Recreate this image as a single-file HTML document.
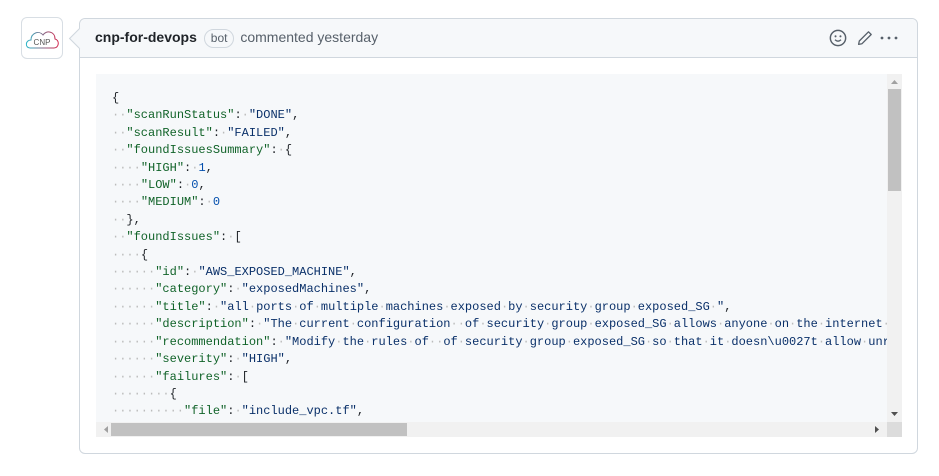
<!DOCTYPE html>
<html><head><meta charset="utf-8"><style>
body{margin:0;background:#fff;width:939px;height:476px;position:relative;font-family:"Liberation Sans",sans-serif;overflow:hidden}
.av{position:absolute;left:21px;top:17px;width:40px;height:40px;border:1px solid #d8dee4;border-radius:6px;background:#fff}
.box{position:absolute;left:79px;top:18px;width:837px;height:434px;border:1px solid #d0d7de;border-radius:6px;background:#fff}
.hd{height:38px;background:#f6f8fa;border-bottom:1px solid #d0d7de;border-radius:6px 6px 0 0;position:relative}
.arrow{position:absolute;left:-8px;top:12px;width:14px;height:14px;background:#f6f8fa;border-left:1px solid #d0d7de;border-bottom:1px solid #d0d7de;transform:rotate(45deg)}
.ht{position:absolute;left:15px;top:10px;font-size:14px;color:#57606a;white-space:nowrap}
.ht b{color:#1f2328}
.bot{display:inline-block;border:1px solid #d0d7de;border-radius:10px;padding:0 6px;font-size:12px;line-height:17px;margin:0 2px 0 3px;color:#57606a}
.code{position:absolute;left:16px;top:55px;width:806px;height:363px;background:#f6f8fa;overflow:hidden}
pre{margin:0;position:absolute;left:16px;top:16px;font-family:"Liberation Mono",monospace;font-size:12px;line-height:17.4px;color:#1f2328;width:775px;overflow:hidden}
.d{color:#bbb}.k{color:#116329}.s{color:#0a3069}.n{color:#0550ae}
.vs{position:absolute;right:0;top:0;width:15px;height:348px;background:#f1f1f1}
.hs{position:absolute;left:0;bottom:0;width:791px;height:15px;background:#f1f1f1}
.corner{position:absolute;right:0;bottom:0;width:15px;height:15px;background:#dcdcdc}
</style></head><body>
<div class="av"><svg width="40" height="40" viewBox="0 0 40 40"><defs><linearGradient id="g" x1="0" x2="1"><stop offset="0" stop-color="#2bb5c8"/><stop offset="1" stop-color="#d2224a"/></linearGradient></defs><path d="M8 30 C3 30 3 22 9 22 C9 15 17 12 21 17 C24 12 33 13 33 21 C38 22 37 30 32 30 Z" fill="none" stroke="url(#g)" stroke-width="1"/><text x="20" y="27" font-size="8" text-anchor="middle" fill="#555" font-family="Liberation Sans">CNP</text></svg></div>
<div class="box">
<div class="hd"><div class="arrow"></div><div class="ht"><b>cnp-for-devops</b> <span class="bot">bot</span> commented yesterday</div>
<svg style="position:absolute;left:749px;top:10px" width="18" height="18" viewBox="0 0 16 16"><circle cx="8" cy="8" r="6.8" fill="none" stroke="#57606a" stroke-width="1.3"/><circle cx="5.8" cy="6.5" r=".9" fill="#57606a"/><circle cx="10.2" cy="6.5" r=".9" fill="#57606a"/><path d="M5.3 9.6 Q8 12 10.7 9.6" fill="none" stroke="#57606a" stroke-width="1.2"/></svg>
<svg style="position:absolute;left:777px;top:11px" width="16" height="16" viewBox="0 0 16 16"><path d="M11.5 1.8 L14.2 4.5 L5 13.7 L1.6 14.4 L2.3 11 Z" fill="none" stroke="#57606a" stroke-width="1.3" stroke-linejoin="round"/></svg>
<svg style="position:absolute;left:800px;top:17px" width="18" height="4"><circle cx="2" cy="2" r="1.4" fill="#57606a"/><circle cx="9" cy="2" r="1.4" fill="#57606a"/><circle cx="16" cy="2" r="1.4" fill="#57606a"/></svg>
</div>
<div class="code">
<pre>{
<span class="d">··</span><span class="k">"scanRunStatus"</span>:<span class="d">·</span><span class="s">"DONE"</span>,
<span class="d">··</span><span class="k">"scanResult"</span>:<span class="d">·</span><span class="s">"FAILED"</span>,
<span class="d">··</span><span class="k">"foundIssuesSummary"</span>:<span class="d">·</span>{
<span class="d">····</span><span class="k">"HIGH"</span>:<span class="d">·</span><span class="n">1</span>,
<span class="d">····</span><span class="k">"LOW"</span>:<span class="d">·</span><span class="n">0</span>,
<span class="d">····</span><span class="k">"MEDIUM"</span>:<span class="d">·</span><span class="n">0</span>
<span class="d">··</span>},
<span class="d">··</span><span class="k">"foundIssues"</span>:<span class="d">·</span>[
<span class="d">····</span>{
<span class="d">······</span><span class="k">"id"</span>:<span class="d">·</span><span class="s">"AWS_EXPOSED_MACHINE"</span>,
<span class="d">······</span><span class="k">"category"</span>:<span class="d">·</span><span class="s">"exposedMachines"</span>,
<span class="d">······</span><span class="k">"title"</span>:<span class="d">·</span><span class="s">"all<span class="d">·</span>ports<span class="d">·</span>of<span class="d">·</span>multiple<span class="d">·</span>machines<span class="d">·</span>exposed<span class="d">·</span>by<span class="d">·</span>security<span class="d">·</span>group<span class="d">·</span>exposed_SG<span class="d">·</span>"</span>,
<span class="d">······</span><span class="k">"description"</span>:<span class="d">·</span><span class="s">"The<span class="d">·</span>current<span class="d">·</span>configuration<span class="d">··</span>of<span class="d">·</span>security<span class="d">·</span>group<span class="d">·</span>exposed_SG<span class="d">·</span>allows<span class="d">·</span>anyone<span class="d">·</span>on<span class="d">·</span>the<span class="d">·</span>internet<span class="d">·</span>to</span>
<span class="d">······</span><span class="k">"recommendation"</span>:<span class="d">·</span><span class="s">"Modify<span class="d">·</span>the<span class="d">·</span>rules<span class="d">·</span>of<span class="d">··</span>of<span class="d">·</span>security<span class="d">·</span>group<span class="d">·</span>exposed_SG<span class="d">·</span>so<span class="d">·</span>that<span class="d">·</span>it<span class="d">·</span>doesn\u0027t<span class="d">·</span>allow<span class="d">·</span>unrestricted</span>
<span class="d">······</span><span class="k">"severity"</span>:<span class="d">·</span><span class="s">"HIGH"</span>,
<span class="d">······</span><span class="k">"failures"</span>:<span class="d">·</span>[
<span class="d">········</span>{
<span class="d">··········</span><span class="k">"file"</span>:<span class="d">·</span><span class="s">"include_vpc.tf"</span>,
<span class="d">··········</span><span class="k">"matching"</span>:<span class="d">·</span>{
</pre>
<div class="vs"><svg width="15" height="348"><path d="M4 10 L11 10 L7.5 6 Z" fill="#a0a0a0"/><rect x="1" y="15" width="13" height="102" fill="#c1c1c1"/><path d="M4 338 L11 338 L7.5 342 Z" fill="#505050"/></svg></div>
<div class="hs"><svg width="791" height="15"><path d="M8 7.5 L12 4 L12 11 Z" fill="#a0a0a0"/><rect x="15" y="1" width="296" height="13" fill="#c1c1c1"/><path d="M783 7.5 L779 4 L779 11 Z" fill="#505050"/></svg></div>
<div class="corner"></div>
</div>
</div>
</body></html>
